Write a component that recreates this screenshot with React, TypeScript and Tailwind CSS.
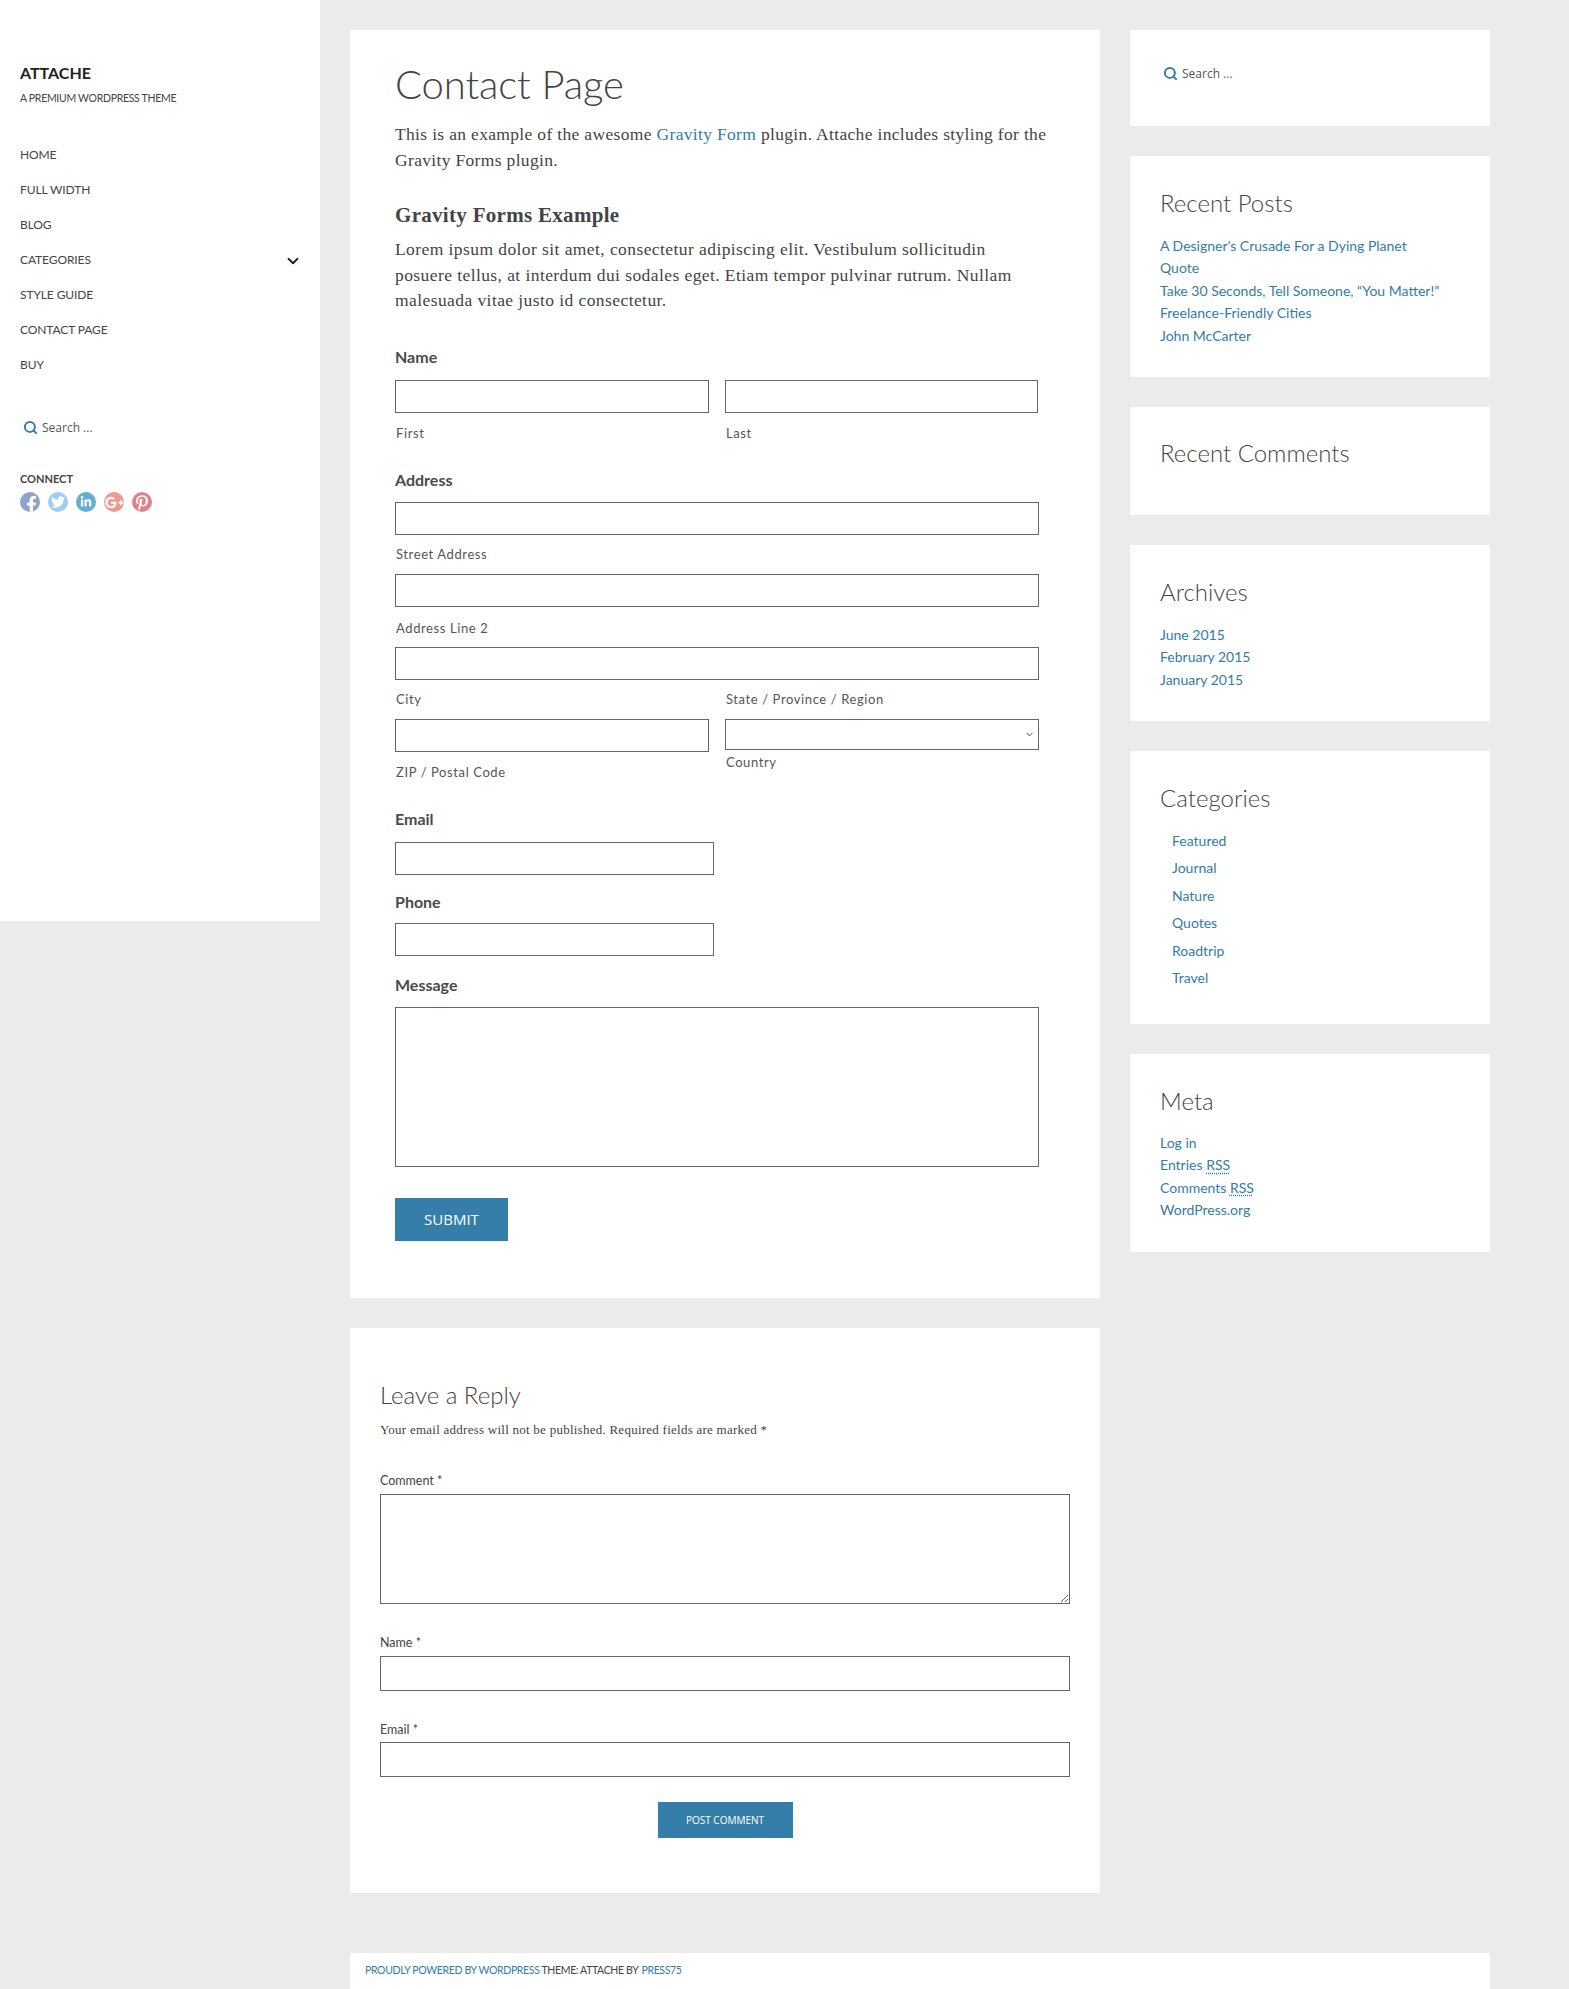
import { ChevronDown, Search } from "lucide-react";
import { FaFacebookF, FaGooglePlusG, FaLinkedinIn, FaPinterestP, FaTwitter } from "react-icons/fa";

const nav = ["Home", "Full Width", "Blog", "Categories", "Style Guide", "Contact Page", "Buy"];

const socials = [
  { icon: FaFacebookF, bg: "bg-[#8fa3c9]", size: "h-[17px] w-[17px] mt-[4px] ml-[3px]", name: "Facebook" },
  { icon: FaTwitter, bg: "bg-[#9dcdf2]", size: "h-[14px] w-[14px]", name: "Twitter" },
  { icon: FaLinkedinIn, bg: "bg-[#63aed2]", size: "h-3 w-3", name: "LinkedIn" },
  { icon: FaGooglePlusG, bg: "bg-[#ec9a90]", size: "h-[19px] w-[19px]", name: "Google Plus" },
  { icon: FaPinterestP, bg: "bg-[#df838a]", size: "h-[16px] w-[16px] mt-[1px]", name: "Pinterest" },
];

const field = "block h-[33px] w-full border border-[#666] bg-white";
const heading = "text-[16px] leading-[22px] font-bold";
const sublabel = "h-5 pl-px text-[13px] leading-5 tracking-[0.6px] text-[#555]";
const serif = "font-['Liberation_Serif',serif] text-[#444]";
const link = "text-[#337ca8]";

function SearchBox({ className }: { className: string }) {
  return (
    <div className={`flex items-center ${className}`}>
      <Search className="h-[15px] w-[15px] text-[#337ca8]" strokeWidth={3.2} aria-hidden="true" />
      <span className="mt-px ml-1 font-['Open_Sans',sans-serif] text-[12px] leading-5 text-[#555]">Search ...</span>
    </div>
  );
}

function Widget({ title, className, children }: { title: string; className: string; children?: React.ReactNode }) {
  return (
    <section className={`bg-white px-[30px] ${className}`}>
      <h3 className="text-[24px] leading-[34px] font-light text-[#444]">{title}</h3>
      {children}
    </section>
  );
}

function LinkList({ items }: { items: string[] }) {
  return (
    <ul className="mt-[15px] text-[14px] leading-[22.4px] text-[#337ca8]">
      {items.map((item) => (
        <li key={item}>{item}</li>
      ))}
    </ul>
  );
}

function Sidebar() {
  return (
    <aside className="h-[921px] w-[320px] shrink-0 bg-white pt-[62px] pl-5">
      <div className="text-[16px] leading-[22px] font-bold text-[#222]">ATTACHE</div>
      <div className="mt-[6px] text-[10.5px] leading-[16px] tracking-[-0.3px] text-[#444]">A PREMIUM WORDPRESS THEME</div>
      <nav className="mt-[31px]">
        {nav.map((item) => (
          <div key={item} className="flex h-[35px] items-center pr-[18px] text-[12px] tracking-[-0.1px] text-[#444] uppercase">
            <span>{item}</span>
            {item === "Categories" && <ChevronDown className="mt-[2px] ml-auto h-[18px] w-[18px] text-[#222]" strokeWidth={2.5} aria-hidden="true" />}
          </div>
        ))}
      </nav>
      <SearchBox className="mt-[35px] pl-[3px]" />
      <div className="mt-[33px] text-[11px] leading-[16px] font-bold text-[#444]">CONNECT</div>
      <div className="mt-[5px] flex gap-2">
        {socials.map(({ icon: Icon, bg, size, name }) => (
          <span key={name} aria-label={name} className={`flex h-5 w-5 items-center justify-center overflow-hidden rounded-full text-white ${bg}`}>
            <Icon className={`shrink-0 ${size}`} aria-hidden="true" />
          </span>
        ))}
      </div>
    </aside>
  );
}

function ContactForm() {
  return (
    <form className="mt-[32px] text-[#4a4a4a]">
      <div className={heading}>Name</div>
      <div className="mt-[12px] grid w-[642px] grid-cols-[314px_313px] gap-x-4">
        <div>
          <input className={field} />
          <div className={`mt-[10px] ${sublabel}`}>First</div>
        </div>
        <div>
          <input className={field} />
          <div className={`mt-[10px] ${sublabel}`}>Last</div>
        </div>
      </div>

      <div className={`mt-[26px] ${heading}`}>Address</div>
      <div className="mt-[11px] w-[644px]">
        <input className={field} />
        <div className={`mt-[9px] ${sublabel}`}>Street Address</div>
        <input className={`mt-[10px] ${field}`} />
        <div className={`mt-[11px] ${sublabel}`}>Address Line 2</div>
        <input className={`mt-[9px] ${field}`} />
        <div className="mt-[9px] grid grid-cols-[314px_314px] gap-x-4">
          <div className={sublabel}>City</div>
          <div className={sublabel}>State / Province / Region</div>
        </div>
        <div className="mt-[10px] grid grid-cols-[314px_314px] items-start gap-x-4">
          <div>
            <input className={field} />
            <div className={`mt-[10px] ${sublabel}`}>ZIP / Postal Code</div>
          </div>
          <div>
            <div className="relative">
              <select aria-label="Country" className="block h-[31px] w-full appearance-none border border-[#666] bg-white" />
              <ChevronDown className="absolute top-[10px] right-[4px] h-[11px] w-[11px] text-[#333]" aria-hidden="true" />
            </div>
            <div className={`mt-[2px] ${sublabel}`}>Country</div>
          </div>
        </div>
      </div>

      <div className={`mt-[26px] ${heading}`}>Email</div>
      <input className={`mt-[12px] !w-[319px] ${field}`} />
      <div className={`mt-[16px] ${heading}`}>Phone</div>
      <input className={`mt-[10px] !w-[319px] ${field}`} />
      <div className={`mt-[18px] ${heading}`}>Message</div>
      <textarea className="mt-[11px] block h-[160px] w-[644px] resize-none border border-[#666] bg-white" />
      <button type="button" className="mt-[31px] block h-[43px] w-[113px] bg-[#347ea9] font-['Open_Sans',sans-serif] text-[15px] text-white">
        SUBMIT
      </button>
    </form>
  );
}

function CommentForm() {
  const label = "text-[12.5px] leading-[18px] text-[#444]";
  return (
    <section className="mt-[30px] h-[565px] bg-white px-[30px] pt-[49px]">
      <h3 className="text-[24px] leading-[36px] font-light text-[#444]">Leave a Reply</h3>
      <p className={`mt-[7px] text-[13px] leading-[20px] tracking-[0.25px] ${serif}`}>
        Your email address will not be published. Required fields are marked *
      </p>
      <div className={`mt-[32px] ${label}`}>Comment *</div>
      <textarea className="mt-[4px] block h-[110px] w-[690px] border border-[#666] bg-white" />
      <div className={`mt-[30px] ${label}`}>Name *</div>
      <input className="mt-[4px] block h-[35px] w-[690px] border border-[#666] bg-white" />
      <div className={`mt-[30px] ${label}`}>Email *</div>
      <input className="mt-[3px] block h-[35px] w-[690px] border border-[#666] bg-white" />
      <button type="button" className="mx-auto mt-[25px] block h-9 w-[135px] bg-[#347ea9] font-['Open_Sans',sans-serif] text-[10px] text-white">
        POST COMMENT
      </button>
    </section>
  );
}

export default function App() {
  return (
    <div className="flex h-[1989px] overflow-hidden bg-[#ebebeb] font-['Lato',sans-serif]">
      <Sidebar />
      <div className="ml-[30px] flex w-[1140px] flex-col pt-[30px]">
        <div className="flex gap-[30px]">
          <main className="w-[750px]">
            <article className="h-[1268px] bg-white px-[45px] pt-[28px]">
              <h1 className="text-[40px] leading-[52px] font-light tracking-[-0.1px] text-[#444]">Contact Page</h1>
              <p className={`mt-[12px] text-[17.5px] leading-[25.6px] tracking-[0.33px] ${serif}`}>
                This is an example of the awesome <a className={link}>Gravity Form</a> plugin. Attache includes styling for the Gravity Forms plugin.
              </p>
              <h2 className={`mt-[27px] text-[21px] leading-[30px] font-bold tracking-[0.3px] ${serif}`}>Gravity Forms Example</h2>
              <p className={`mt-[7px] text-[17.5px] leading-[25.6px] tracking-[0.42px] ${serif}`}>
                Lorem ipsum dolor sit amet, consectetur adipiscing elit. Vestibulum sollicitudin
                <br />
                posuere tellus, at interdum dui sodales eget. Etiam tempor pulvinar rutrum. Nullam
                <br />
                malesuada vitae justo id consectetur.
              </p>
              <ContactForm />
            </article>
            <CommentForm />
          </main>
          <div className="flex w-[360px] flex-col gap-[30px]">
            <section className="h-[96px] bg-white pt-[33px] pl-[33px]">
              <SearchBox className="" />
            </section>
            <Widget title="Recent Posts" className="h-[221px] pt-[30px]">
              <LinkList items={["A Designer’s Crusade For a Dying Planet", "Quote", "Take 30 Seconds, Tell Someone, “You Matter!”", "Freelance-Friendly Cities", "John McCarter"]} />
            </Widget>
            <Widget title="Recent Comments" className="h-[108px] pt-[29px]" />
            <Widget title="Archives" className="h-[176px] pt-[30px]">
              <LinkList items={["June 2015", "February 2015", "January 2015"]} />
            </Widget>
            <Widget title="Categories" className="h-[273px] pt-[30px]">
              <ul className="mt-[12px] pl-3 text-[14px] leading-[27.4px] text-[#337ca8]">
                {["Featured", "Journal", "Nature", "Quotes", "Roadtrip", "Travel"].map((item) => (
                  <li key={item}>{item}</li>
                ))}
              </ul>
            </Widget>
            <Widget title="Meta" className="h-[198px] pt-[30px]">
              <ul className="mt-[14px] text-[14px] leading-[22.4px] text-[#337ca8]">
                <li>Log in</li>
                <li>Entries <abbr className="underline decoration-dotted underline-offset-2">RSS</abbr></li>
                <li>Comments <abbr className="underline decoration-dotted underline-offset-2">RSS</abbr></li>
                <li>WordPress.org</li>
              </ul>
            </Widget>
          </div>
        </div>
        <footer className="mt-[60px] flex h-[36px] items-center bg-white pl-[15px] text-[10.5px] tracking-[-0.35px] text-[#444] uppercase">
          <span className={link}>Proudly powered by WordPress</span>
          <span className="ml-[2px]">Theme: Attache by</span>
          <span className={`ml-[3px] ${link}`}>Press75</span>
        </footer>
      </div>
    </div>
  );
}
